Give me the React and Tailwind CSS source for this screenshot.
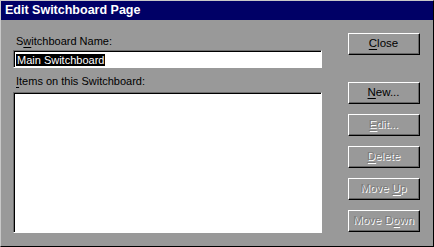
import React from "react";

function U({ children }) {
  return <span className="underline underline-offset-[2px]">{children}</span>;
}

function Btn({ children, disabled, className = "" }) {
  return (
    <div
      className={`w-[72px] h-[22px] border border-t-white border-l-white border-r-black border-b-black ${className}`}
    >
      <div
        className={`w-full h-full border-r border-b border-r-[#666] border-b-[#666] flex items-center justify-center text-[11.5px] leading-none ${
          disabled ? "text-[#7c7c7c] [text-shadow:1px_1px_0_#ffffff]" : "text-black"
        }`}
      >
        <span className="whitespace-pre">{children}</span>
      </div>
    </div>
  );
}

export default function App() {
  return (
    <div className="w-[434px] h-[247px] bg-[#999999] border border-t-[#c8c8c8] border-l-[#c8c8c8] border-r-black border-b-black font-['Liberation_Sans',Arial,sans-serif] overflow-hidden">
      <div className="h-[19px] bg-[#000066] text-white font-bold text-[12.5px] leading-[19px] pl-[4px]">
        Edit Switchboard Page
      </div>
      <div className="flex pl-[12px]">
        <div className="w-[309px] flex flex-col">
          <div className="mt-[15px] h-[13px] text-[11px] leading-[13px] text-black pl-[3px]">
            S<U>w</U>itchboard Name:
          </div>
          <div className="mt-[2px] h-[18px] border border-t-[#6e6e6e] border-l-[#6e6e6e] border-r-white border-b-white">
            <div className="h-full border-t border-l border-black bg-white flex items-center pl-[1px]">
              <span className="bg-black text-white text-[11px] leading-[12px] px-[1px]">
                Main Switchboard
              </span>
            </div>
          </div>
          <div className="mt-[7px] h-[13px] text-[11px] leading-[13px] text-black pl-[3px]">
            <U>I</U>tems on this Switchboard:
          </div>
          <div className="mt-[4px] h-[141px] border border-t-[#6e6e6e] border-l-[#6e6e6e] border-r-white border-b-white">
            <div className="h-full border-t border-l border-black bg-white" />
          </div>
        </div>
        <div className="ml-[26px] flex flex-col pt-[13px]">
          <Btn>
            <U>C</U>lose
          </Btn>
          <Btn className="mt-[27px]">
            <U>N</U>ew...
          </Btn>
          <Btn className="mt-[10px]" disabled>
            <U>E</U>dit...
          </Btn>
          <Btn className="mt-[10px]" disabled>
            <U>D</U>elete
          </Btn>
          <Btn className="mt-[10px]" disabled>
            {"Move "}<U>U</U>p
          </Btn>
          <Btn className="mt-[10px]" disabled>
            {"Move D"}<U>o</U>wn
          </Btn>
        </div>
      </div>
    </div>
  );
}
